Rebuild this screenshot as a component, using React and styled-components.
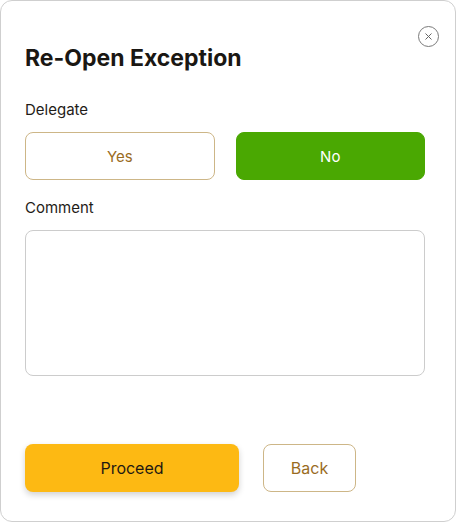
import React, { useState } from 'react';
import styled, { createGlobalStyle } from 'styled-components';

const GlobalStyle = createGlobalStyle`
  * { box-sizing: border-box; }
  body {
    margin: 0;
    font-family: Inter, "Noto Sans", sans-serif;
    background: #ffffff;
  }
`;

const Card = styled.div`
  position: relative;
  width: 456px;
  height: 522px;
  border: 1px solid #cfcfcf;
  border-radius: 12px;
  background: #ffffff;
  padding: 42px 30px 0 24px;
  display: flex;
  flex-direction: column;
`;

const CloseButton = styled.button`
  position: absolute;
  top: 25px;
  right: 16px;
  width: 21px;
  height: 21px;
  padding: 0;
  border: 1px solid #7a7a7a;
  border-radius: 50%;
  background: transparent;
  display: flex;
  align-items: center;
  justify-content: center;
  cursor: pointer;
`;

const Title = styled.h1`
  margin: 0;
  font-size: 23px;
  line-height: 30px;
  font-weight: 700;
  color: #1a1713;
`;

const Label = styled.div`
  font-size: 15px;
  line-height: 20px;
  color: #1f1c18;
  margin-top: ${p => p.$top}px;
`;

const ToggleRow = styled.div`
  display: grid;
  grid-template-columns: 1fr 1fr;
  gap: 21px;
  margin-top: 12px;
`;

const Toggle = styled.button`
  height: 48px;
  border-radius: 8px;
  font-family: inherit;
  font-size: 15px;
  cursor: pointer;
  border: 1px solid ${p => (p.$active ? '#4aa802' : '#cdb687')};
  background: ${p => (p.$active ? '#4aa802' : '#ffffff')};
  color: ${p => (p.$active ? '#ffffff' : '#9a6c1f')};
`;

const CommentBox = styled.textarea`
  margin-top: 12px;
  height: 146px;
  width: 100%;
  border: 1px solid #cccccc;
  border-radius: 8px;
  resize: none;
  padding: 10px 12px;
  font-family: inherit;
  font-size: 14px;
  outline: none;
`;

const Actions = styled.div`
  display: flex;
  gap: 24px;
  margin-top: 68px;
`;

const PrimaryButton = styled.button`
  width: 214px;
  height: 48px;
  border: none;
  border-radius: 8px;
  background: #fdb913;
  color: #1f1a12;
  font-family: inherit;
  font-size: 16px;
  box-shadow: 0 3px 6px rgba(0, 0, 0, 0.18);
  cursor: pointer;
`;

const SecondaryButton = styled.button`
  width: 93px;
  height: 48px;
  border: 1px solid #cdb687;
  border-radius: 8px;
  background: #ffffff;
  color: #9a6c1f;
  font-family: inherit;
  font-size: 16px;
  cursor: pointer;
`;

export default function App() {
  const [delegate, setDelegate] = useState(false);

  return (
    <>
      <GlobalStyle />
      <Card>
        <CloseButton aria-label="Close">
          <svg width="9" height="9" viewBox="0 0 9 9">
            <path d="M1.5 1.5 L7.5 7.5 M7.5 1.5 L1.5 7.5" stroke="#666" strokeWidth="1" />
          </svg>
        </CloseButton>
        <Title>Re-Open Exception</Title>
        <Label $top={27}>Delegate</Label>
        <ToggleRow>
          <Toggle $active={delegate} onClick={() => setDelegate(true)}>Yes</Toggle>
          <Toggle $active={!delegate} onClick={() => setDelegate(false)}>No</Toggle>
        </ToggleRow>
        <Label $top={18}>Comment</Label>
        <CommentBox />
        <Actions>
          <PrimaryButton>Proceed</PrimaryButton>
          <SecondaryButton>Back</SecondaryButton>
        </Actions>
      </Card>
    </>
  );
}
